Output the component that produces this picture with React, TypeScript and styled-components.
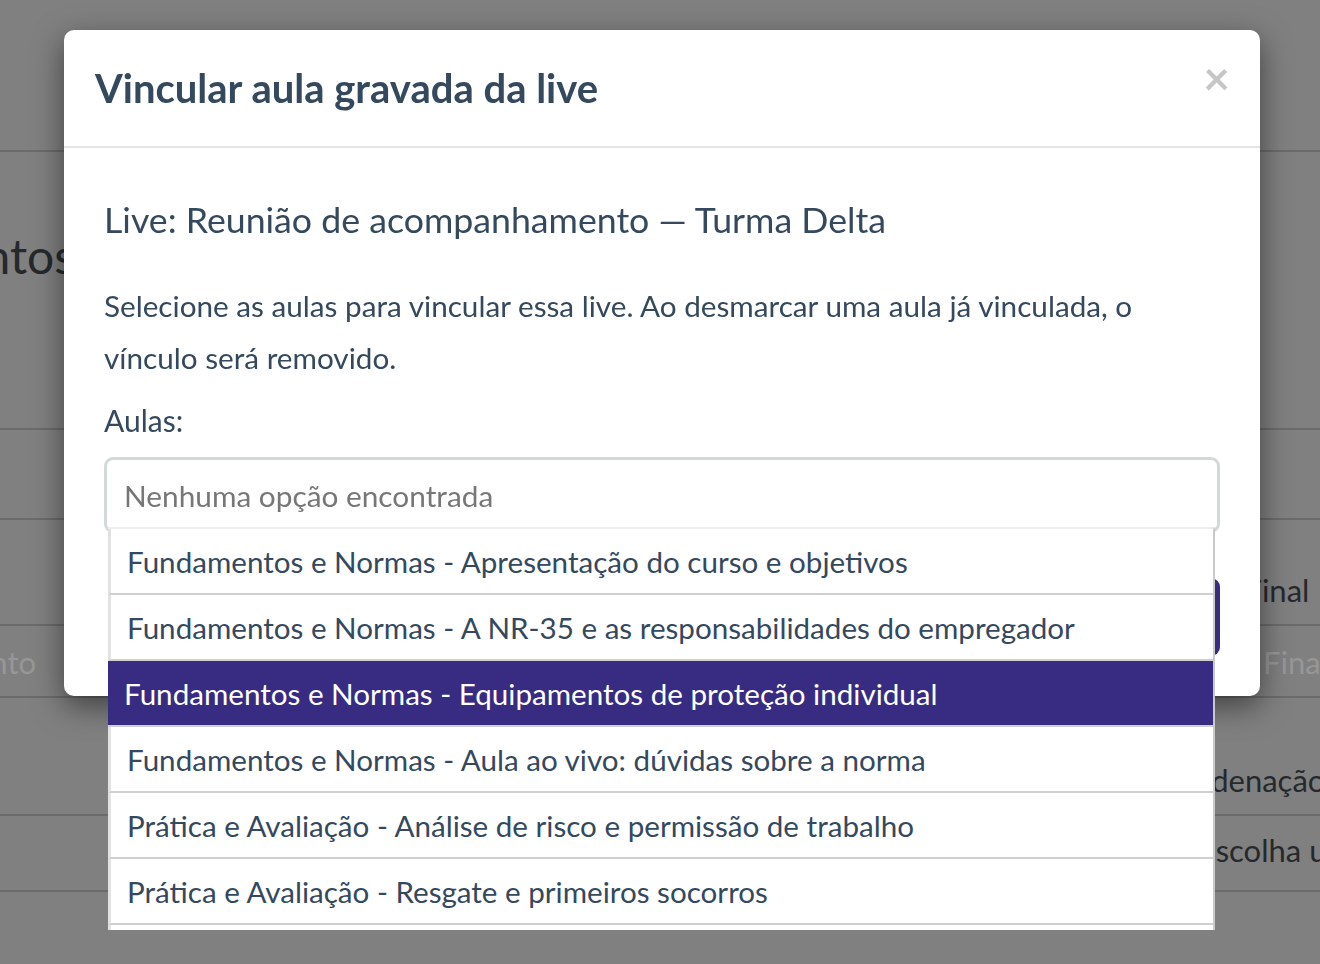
import { createGlobalStyle, styled } from "styled-components";

const GlobalStyle = createGlobalStyle`
  html, body {
    margin: 0;
    padding: 0;
    height: 100%;
    overflow: hidden;
  }
  body {
    background: #808080;
    font-family: Lato, "Open Sans", "Liberation Sans", sans-serif;
  }
  * {
    box-sizing: border-box;
  }
`;

// dimmed page behind the modal
const Page = styled.div`
  height: 964px;
  display: flex;
  flex-direction: column;
`;

const PageRow = styled.div<{ h: number; top?: number; last?: boolean }>`
  height: ${(p) => p.h}px;
  flex: ${(p) => (p.last ? 1 : "none")};
  display: flex;
  align-items: flex-start;
  padding-top: ${(p) => p.top || 0}px;
  border-bottom: ${(p) => (p.last ? "none" : "2px solid #6b6b6b")};
`;

const LeftCell = styled.div<{ w?: number }>`
  width: ${(p) => p.w || 75}px;
  flex: none;
  display: flex;
  justify-content: flex-end;
  white-space: nowrap;
`;

const RightCell = styled.div<{ offset?: number }>`
  margin-left: auto;
  width: ${(p) => 1320 - (p.offset || 1182)}px;
  white-space: nowrap;
  overflow: hidden;
`;

const PageHeading = styled.span`
  font-size: 48px;
  line-height: 56px;
  color: #25292d;
`;

const PageText = styled.span<{ faded?: boolean }>`
  font-size: 31px;
  line-height: 40px;
  color: ${(p) => (p.faded ? "#979797" : "#25292d")};
`;

// modal
const Layer = styled.div`
  position: fixed;
  inset: 0;
  display: flex;
  align-items: flex-start;
  padding: 30px 0 0 64px;
`;

const Modal = styled.div`
  width: 1196px;
  background: #fff;
  border-radius: 10px;
  box-shadow: 0 10px 30px rgba(0, 0, 0, 0.5);
`;

const ModalHeader = styled.div`
  height: 118px;
  display: flex;
  align-items: center;
  justify-content: space-between;
  padding: 0 30px 0 31px;
  border-bottom: 2px solid #e5e5e5;
`;

const ModalTitle = styled.h4`
  margin: 0;
  font-size: 40px;
  font-weight: 700;
  color: #34495e;
  line-height: 52px;
`;

const CloseButton = styled.button`
  border: none;
  background: none;
  padding: 0;
  margin-bottom: 20px;
  font-family: inherit;
  font-size: 46px;
  font-weight: 700;
  line-height: 1;
  color: #c6c6c6;
  cursor: pointer;
`;

const ModalBody = styled.div`
  padding: 48px 40px 14px;
`;

const LiveTitle = styled.h3`
  margin: 0;
  font-size: 35.7px;
  font-weight: 400;
  line-height: 48px;
  color: #34495e;
`;

const Description = styled.p`
  margin: 36px 0 0;
  font-size: 29.7px;
  line-height: 52px;
  color: #34495e;
`;

const Label = styled.label`
  display: block;
  margin-top: 16px;
  font-size: 30px;
  line-height: 40px;
  color: #34495e;
`;

const Field = styled.div`
  position: relative;
  margin-top: 17px;
`;

const SearchInput = styled.input`
  display: block;
  width: 100%;
  height: 76px;
  padding: 0 17px;
  border: 3px solid #d3d9d9;
  border-radius: 9px;
  font-family: inherit;
  font-size: 29.8px;
  color: #34495e;
  outline: none;
  &::placeholder {
    color: #777;
  }
`;

const OptionList = styled.ul`
  position: absolute;
  top: 70px;
  left: 4px;
  right: 5px;
  max-height: 403px;
  overflow: hidden;
  margin: 0;
  padding: 0;
  list-style: none;
  background: #fff;
  border-top: 2px solid #ededed;
  border-right: 2px solid #c9c9c9;
  z-index: 2;
`;

const OptionItem = styled.li<{ active?: boolean }>`
  height: 66px;
  display: flex;
  align-items: center;
  padding-left: 16px;
  font-size: 29.6px;
  white-space: nowrap;
  color: ${(p) => (p.active ? "#fff" : "#34495e")};
  background: ${(p) => (p.active ? "#372c82" : "#fff")};
  border-left: ${(p) => (p.active ? "none" : "3px solid #e2e2e2")};
  border-bottom: 2px solid #d0d0d0;
`;

const ModalFooter = styled.div`
  display: flex;
  justify-content: flex-end;
  padding: 31px 40px 40px;
`;

const PrimaryButton = styled.button`
  height: 78px;
  padding: 0 44px;
  border: none;
  border-radius: 9px;
  background: #372c82;
  color: #fff;
  font-family: inherit;
  font-size: 30px;
`;

const aulas = [
  "Fundamentos e Normas - Apresentação do curso e objetivos",
  "Fundamentos e Normas - A NR-35 e as responsabilidades do empregador",
  "Fundamentos e Normas - Equipamentos de proteção individual",
  "Fundamentos e Normas - Aula ao vivo: dúvidas sobre a norma",
  "Prática e Avaliação - Análise de risco e permissão de trabalho",
  "Prática e Avaliação - Resgate e primeiros socorros",
  "Prática e Avaliação - Avaliação final",
];

export default function App() {
  return (
    <>
      <GlobalStyle />
      <Page>
        <PageRow h={152} />
        <PageRow h={278} top={76}>
          <LeftCell>
            <PageHeading>Lançamentos</PageHeading>
          </LeftCell>
        </PageRow>
        <PageRow h={90} />
        <PageRow h={106} top={50}>
          <RightCell offset={1160}>
            <PageText>Etapa Final</PageText>
          </RightCell>
        </PageRow>
        <PageRow h={72} top={16}>
          <LeftCell w={36}>
            <PageText faded>Conhecimento</PageText>
          </LeftCell>
          <RightCell offset={1178}>
            <PageText faded>Prova Final</PageText>
          </RightCell>
        </PageRow>
        <PageRow h={118} top={62}>
          <RightCell offset={1176}>
            <PageText>Ordenação</PageText>
          </RightCell>
        </PageRow>
        <PageRow h={76} top={14}>
          <RightCell offset={1198}>
            <PageText>Escolha uma opção</PageText>
          </RightCell>
        </PageRow>
        <PageRow h={0} last />
      </Page>

      <Layer>
        <Modal>
          <ModalHeader>
            <ModalTitle>Vincular aula gravada da live</ModalTitle>
            <CloseButton aria-label="Fechar">×</CloseButton>
          </ModalHeader>
          <ModalBody>
            <LiveTitle>Live: Reunião de acompanhamento — Turma Delta</LiveTitle>
            <Description>
              Selecione as aulas para vincular essa live. Ao desmarcar uma aula já vinculada, o
              vínculo será removido.
            </Description>
            <Label>Aulas:</Label>
            <Field>
              <SearchInput placeholder="Nenhuma opção encontrada" />
              <OptionList>
                {aulas.map((aula, i) => (
                  <OptionItem key={aula} active={i === 2}>
                    {aula}
                  </OptionItem>
                ))}
              </OptionList>
            </Field>
          </ModalBody>
          <ModalFooter>
            <PrimaryButton>Salvar</PrimaryButton>
          </ModalFooter>
        </Modal>
      </Layer>
    </>
  );
}
